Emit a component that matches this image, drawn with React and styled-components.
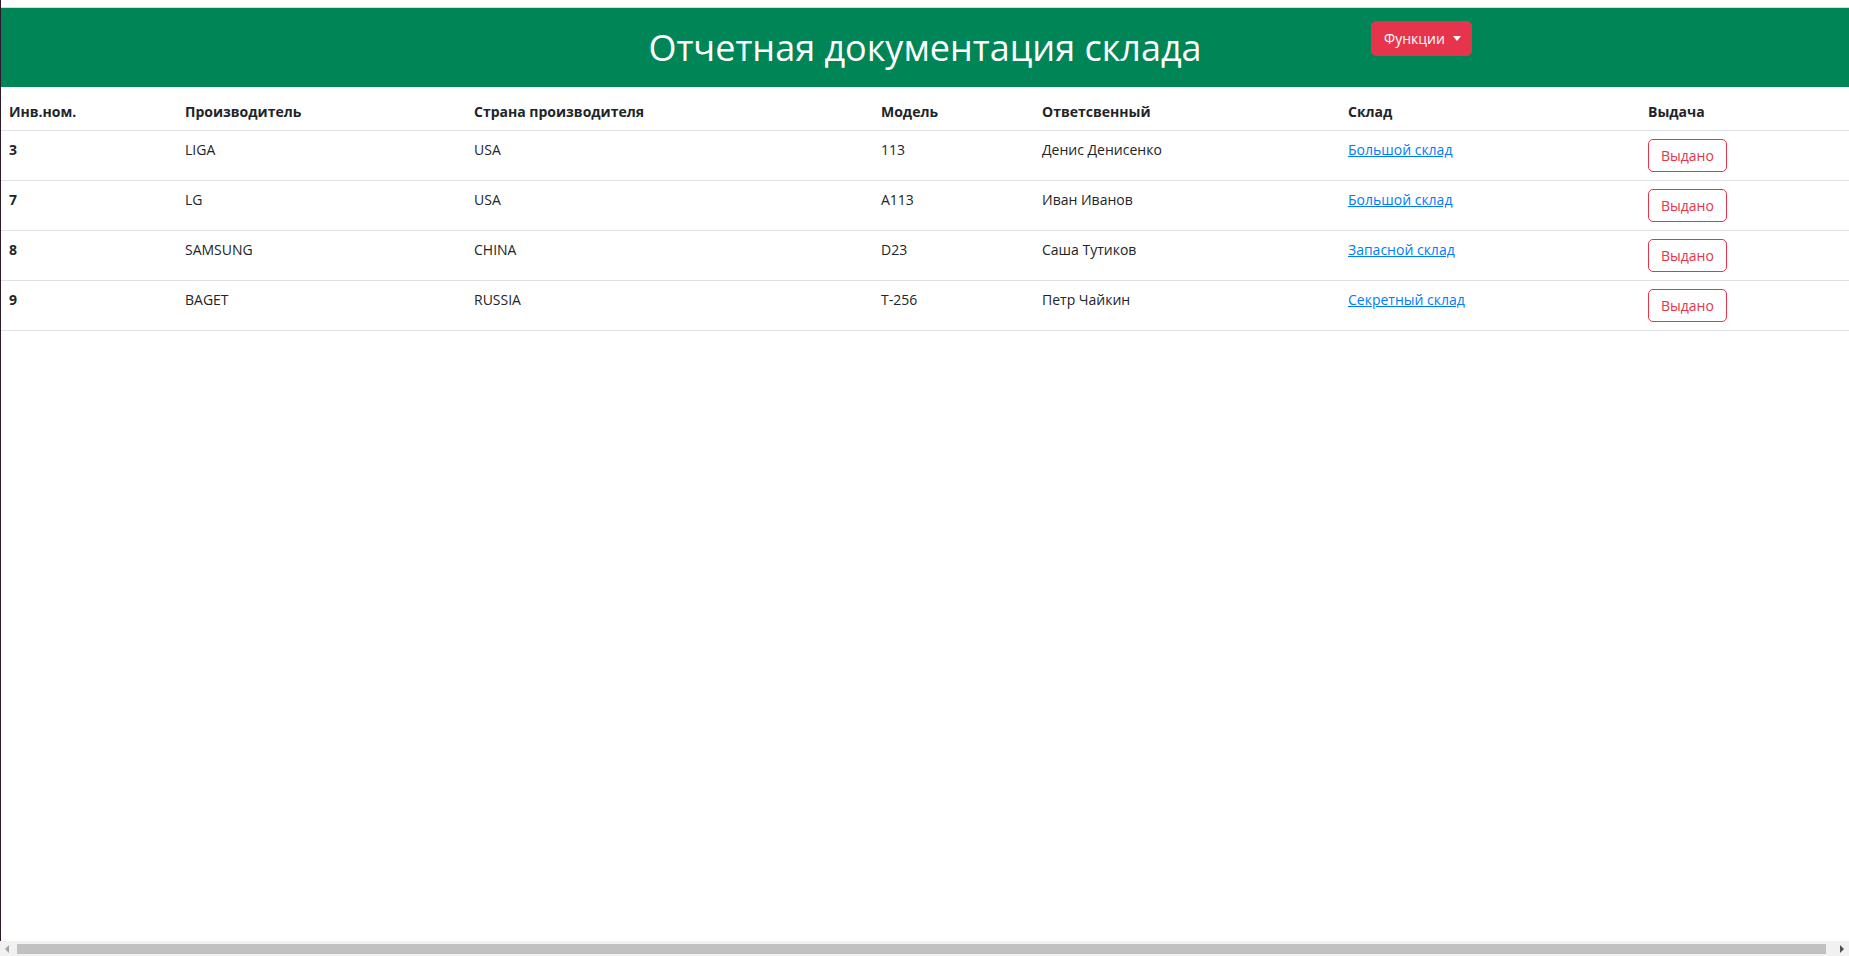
import React from "react";
import styled, { createGlobalStyle } from "styled-components";

const GlobalStyle = createGlobalStyle`
  html, body, #root {
    height: 100%;
  }
  body {
    margin: 0;
    background: #fff;
    font-family: "Open Sans", "Noto Sans", sans-serif;
    font-size: 14px;
    line-height: 1.5;
    color: #212529;
  }
  * {
    box-sizing: border-box;
  }
`;

const rows = [
  { id: 3, maker: "LIGA", country: "USA", model: "113", person: "Денис Денисенко", store: "Большой склад" },
  { id: 7, maker: "LG", country: "USA", model: "A113", person: "Иван Иванов", store: "Большой склад" },
  { id: 8, maker: "SAMSUNG", country: "CHINA", model: "D23", person: "Саша Тутиков", store: "Запасной склад" },
  { id: 9, maker: "BAGET", country: "RUSSIA", model: "T-256", person: "Петр Чайкин", store: "Секретный склад" },
];

const columns = [
  { title: "Инв.ном.", width: 176 },
  { title: "Производитель", width: 289 },
  { title: "Страна производителя", width: 407 },
  { title: "Модель", width: 161 },
  { title: "Ответсвенный", width: 306 },
  { title: "Склад", width: 300 },
  { title: "Выдача" },
];

const App = () => {
  return (
    <Page>
      <GlobalStyle />
      <Header>
        <Title>Отчетная документация склада</Title>
        <MenuButton type="button">Функции</MenuButton>
      </Header>
      <Table>
        <colgroup>
          {columns.map((c) => (
            <col key={c.title} style={c.width ? { width: c.width } : undefined} />
          ))}
        </colgroup>
        <thead>
          <tr>
            {columns.map((c) => (
              <HeadCell key={c.title}>{c.title}</HeadCell>
            ))}
          </tr>
        </thead>
        <tbody>
          {rows.map((r) => (
            <tr key={r.id}>
              <HeadCell as="th" scope="row">{r.id}</HeadCell>
              <Cell>{r.maker}</Cell>
              <Cell>{r.country}</Cell>
              <Cell>{r.model}</Cell>
              <Cell>{r.person}</Cell>
              <Cell>
                <StoreLink href="#">{r.store}</StoreLink>
              </Cell>
              <Cell>
                <IssueButton type="button">Выдано</IssueButton>
              </Cell>
            </tr>
          ))}
        </tbody>
      </Table>
      {/* horizontal scrollbar as seen in the screenshot */}
      <ScrollBar>
        <Arrow $dir="left" />
        <Thumb />
        <Arrow $dir="right" />
      </ScrollBar>
    </Page>
  );
};

const Page = styled.div`
  min-height: 100%;
  border-left: 1px solid #2d1b2a;
  padding-top: 7px;
`;

const Header = styled.header`
  display: grid;
  grid-template-columns: 1fr 1fr;
  height: 80px;
  background: #008556;
  border-top: 1px solid #d4dcd8;
`;

const Title = styled.h1`
  grid-column: 1 / -1;
  grid-row: 1;
  justify-self: center;
  align-self: center;
  margin: 0;
  font-size: 36px;
  font-weight: 500;
  line-height: 1.2;
  color: #fff;
`;

const MenuButton = styled.button`
  grid-column: 2;
  grid-row: 1;
  justify-self: start;
  align-self: start;
  margin: 13px 0 0 446px;
  padding: 6px 10px 6px 12px;
  font: inherit;
  font-size: 14px;
  line-height: 21px;
  color: #fff;
  background: #e5344b;
  border: 1px solid #e5344b;
  border-radius: 5px;
  cursor: pointer;

  &::after {
    content: "";
    display: inline-block;
    margin-left: 8px;
    vertical-align: 3px;
    border-top: 5px solid #fff;
    border-left: 4px solid transparent;
    border-right: 4px solid transparent;
  }
`;

const Table = styled.table`
  width: 100%;
  margin-top: 6px;
  border-collapse: collapse;
  table-layout: fixed;
`;

const HeadCell = styled.th`
  padding: 8px;
  text-align: left;
  vertical-align: top;
  font-weight: 700;
  border-bottom: 1px solid #dee2e6;
`;

const Cell = styled.td`
  padding: 8px;
  vertical-align: top;
  border-bottom: 1px solid #dee2e6;
`;

const StoreLink = styled.a`
  color: #007bff;
  text-decoration: underline;
`;

const IssueButton = styled.button`
  padding: 5px 12px;
  font: inherit;
  font-size: 14px;
  line-height: 21px;
  color: #e5344b;
  background: transparent;
  border: 1px solid #e5344b;
  border-radius: 5px;
  cursor: pointer;
`;

const ScrollBar = styled.div`
  position: fixed;
  left: 0;
  right: 0;
  bottom: 0;
  height: 15px;
  display: flex;
  align-items: center;
  gap: 4px;
  padding: 0 3px;
  background: #f1f1f1;
`;

const Arrow = styled.span`
  width: 0;
  height: 0;
  border-top: 4px solid transparent;
  border-bottom: 4px solid transparent;
  ${(p) =>
    p.$dir === "left"
      ? "border-right: 4px solid #a3a3a3; margin: 0 4px 0 2px;"
      : "border-left: 4px solid #505050; margin: 0 2px 0 4px;"}
`;

const Thumb = styled.div`
  flex: 1;
  height: 10px;
  margin-right: 6px;
  background: #c1c1c1;
`;

export default App;
